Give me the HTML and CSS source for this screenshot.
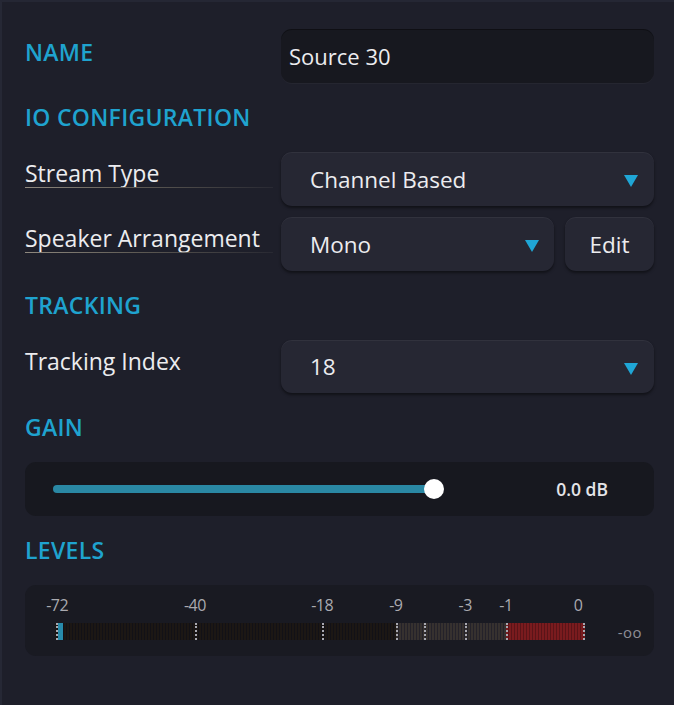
FILE: index.html
```html
<!DOCTYPE html>
<html>
<head>
<meta charset="utf-8">
<link rel="stylesheet" href="styles.css">
</head>
<body>
<div class="panel">
  <div class="row">
    <div class="section-title">NAME</div>
    <div class="input">Source 30</div>
  </div>

  <div class="section-title block">IO CONFIGURATION</div>

  <div class="row">
    <div class="label underlined">Stream Type</div>
    <div class="select"><span>Channel Based</span><span class="arrow"></span></div>
  </div>
  <div class="row gap">
    <div class="label underlined">Speaker Arrangement</div>
    <div class="split">
      <div class="select"><span>Mono</span><span class="arrow"></span></div>
      <div class="button">Edit</div>
    </div>
  </div>

  <div class="section-title block">TRACKING</div>

  <div class="row">
    <div class="label">Tracking Index</div>
    <div class="select narrow"><span>18</span><span class="arrow"></span></div>
  </div>

  <div class="section-title block">GAIN</div>

  <div class="gain">
    <div class="slider">
      <div class="track"></div>
      <div class="knob"></div>
    </div>
    <div class="gain-value">0.0 dB</div>
  </div>

  <div class="section-title block">LEVELS</div>

  <div class="levels">
    <div class="meter-area">
      <div class="scale">
        <span style="left:0.4%">-72</span>
        <span style="left:26.4%">-40</span>
        <span style="left:50.4%">-18</span>
        <span style="left:64.3%">-9</span>
        <span style="left:77.4%">-3</span>
        <span style="left:85.1%">-1</span>
        <span style="left:98.7%">0</span>
      </div>
      <div class="meter">
        <div class="zone dark" style="width:64.3%"></div>
        <div class="zone grey" style="width:20.8%"></div>
        <div class="zone red" style="width:14.9%"></div>
        <div class="level" style="width:1%"></div>
        <i class="tick" style="left:0.1%"></i>
        <i class="tick" style="left:26.4%"></i>
        <i class="tick" style="left:50.4%"></i>
        <i class="tick" style="left:64.3%"></i>
        <i class="tick" style="left:69.6%"></i>
        <i class="tick" style="left:77.4%"></i>
        <i class="tick" style="left:85.1%"></i>
        <i class="tick" style="left:99.6%"></i>
      </div>
    </div>
    <div class="infinity">-oo</div>
  </div>
</div>
</body>
</html>
```

FILE: styles.css
```css
html, body {
  margin: 0;
  padding: 0;
  background: #1e1f2a;
}
body {
  width: 674px;
  height: 705px;
  overflow: hidden;
  font-family: "Open Sans", "Noto Sans", sans-serif;
  color: #e6e6ea;
}
.panel {
  box-sizing: border-box;
  width: 674px;
  height: 705px;
  padding: 27px 20px 0 23px;
  border-left: 2px solid #262835;
  border-top: 2px solid #252734;
  display: flex;
  flex-direction: column;
}
.row {
  display: grid;
  grid-template-columns: 256px 373px;
  align-items: center;
}
.row.gap {
  margin-top: 11px;
}
.section-title {
  color: #1fa3cf;
  font-size: 23px;
  font-weight: 600;
  letter-spacing: 0.3px;
  padding-bottom: 8px;
}
.section-title.block {
  height: 30px;
  line-height: 30px;
  margin: 19px 0 20px;
  padding: 0;
}
.label {
  font-size: 23px;
  color: #ececef;
  padding-bottom: 12px;
  position: relative;
  justify-self: start;
}
.label.underlined {
  justify-self: stretch;
}
.label.underlined::after {
  content: "";
  position: absolute;
  left: 0;
  right: 8px;
  bottom: 13px;
  height: 1px;
  background: linear-gradient(90deg, #8f897f 0%, #5e5a54 45%, rgba(60,60,66,0.35) 100%);
}
.input {
  height: 54px;
  box-sizing: border-box;
  border-radius: 11px;
  background: #17181f;
  box-shadow: inset 0 1px 0 rgba(0,0,0,0.35), 0 1px 0 rgba(255,255,255,0.03);
  font-size: 22px;
  padding: 0 8px;
  display: flex;
  align-items: center;
  color: #ececef;
}
.select, .button {
  height: 54px;
  box-sizing: border-box;
  border-radius: 11px;
  background: #262733;
  box-shadow: 0 2px 3px rgba(0,0,0,0.45), inset 0 1px 0 rgba(255,255,255,0.05);
  font-size: 22.5px;
  color: #ececef;
  display: flex;
  align-items: center;
}
.select {
  padding: 0 16px 0 29px;
  justify-content: space-between;
}
.select.narrow {
  height: 53px;
}
.arrow {
  width: 0;
  height: 0;
  border-left: 7px solid transparent;
  border-right: 7px solid transparent;
  border-top: 12px solid #1fa6d6;
  margin-top: 4px;
}
.split {
  display: grid;
  grid-template-columns: 273px 89px;
  gap: 11px;
}
.split .select {
  padding-right: 15px;
}
.button {
  justify-content: center;
}
.gain {
  height: 54px;
  box-sizing: border-box;
  border-radius: 11px;
  background: #17181f;
  display: flex;
  align-items: center;
  padding: 0 46px 0 28px;
  width: 629px;
}
.slider {
  position: relative;
  width: 391px;
  height: 20px;
  display: flex;
  align-items: center;
}
.track {
  width: 381px;
  height: 8px;
  border-radius: 4px;
  background: #2a88a4;
}
.knob {
  position: absolute;
  right: 0;
  top: 0;
  width: 20px;
  height: 20px;
  border-radius: 50%;
  background: #ffffff;
}
.gain-value {
  margin-left: auto;
  font-size: 17.5px;
  font-weight: 600;
  color: #e4e4e8;
}
.levels {
  width: 629px;
  height: 71px;
  box-sizing: border-box;
  border-radius: 11px;
  background: #191a22;
  display: flex;
  align-items: flex-start;
  padding: 10px 12px 0 30px;
}
.meter-area {
  width: 530px;
}
.scale {
  position: relative;
  height: 20px;
  font-size: 16px;
  color: #aaaab0;
  letter-spacing: -0.5px;
}
.scale span {
  position: absolute;
  top: 0;
  transform: translateX(-50%);
  line-height: 20px;
}
.meter {
  position: relative;
  margin-top: 8px;
  height: 17px;
  display: flex;
}
.zone {
  height: 100%;
}
.zone.dark {
  background: repeating-linear-gradient(90deg, #1c1714 0 2px, #121116 2px 3px);
}
.zone.grey {
  background: repeating-linear-gradient(90deg, #36312f 0 2px, #24222a 2px 3px);
}
.zone.red {
  background: repeating-linear-gradient(90deg, #7a1b1e 0 2px, #5a1418 2px 3px);
}
.level {
  position: absolute;
  left: 0.5%;
  top: 0;
  height: 100%;
  background: #2aa0c6;
  opacity: 0.85;
}
.tick {
  position: absolute;
  top: 0;
  height: 100%;
  width: 0;
  border-left: 2px dotted #a8a8b0;
}
.infinity {
  margin-left: auto;
  margin-top: 27px;
  font-size: 15px;
  color: #8e8e96;
  letter-spacing: 0.5px;
}
```
